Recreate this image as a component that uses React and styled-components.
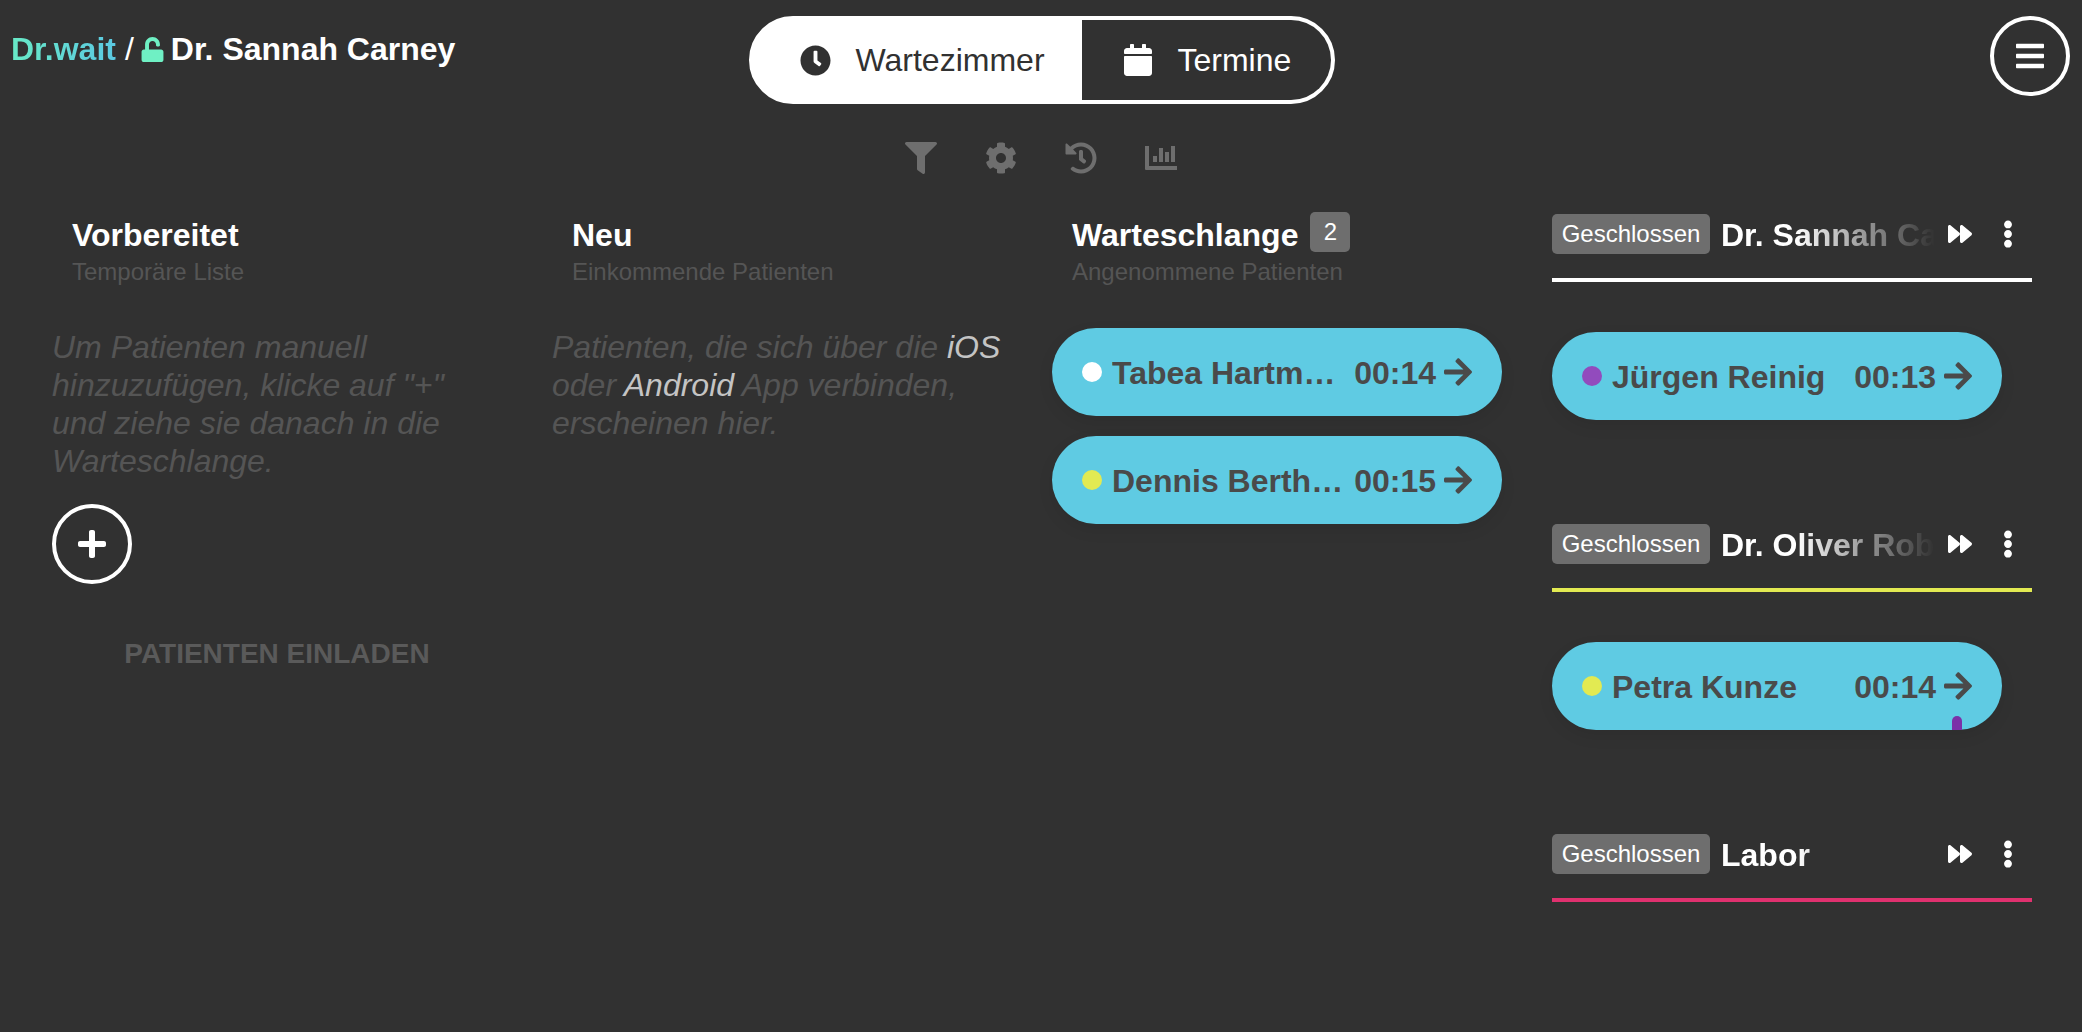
import React from 'react';
import styled, { createGlobalStyle } from 'styled-components';
import { FaClock, FaCalendar, FaFilter, FaCog, FaHistory, FaUnlock, FaBars, FaPlus, FaArrowRight, FaForward, FaEllipsisV } from 'react-icons/fa';

const Global = createGlobalStyle`
  html, body { margin: 0; padding: 0; background: #313131; }
  body { font-family: "Liberation Sans", Arial, sans-serif; color: #fff; }
`;

const Page = styled.div`
  min-height: 1032px;
  box-sizing: border-box;
  background: #313131;
`;
const Header = styled.header`
  display: grid;
  grid-template-columns: 1fr auto 1fr;
  align-items: start;
  padding: 16px 12px 0 12px;
`;
const Logo = styled.div`
  display: flex;
  align-items: center;
  height: 40px;
  margin: 13px 0 0 -1px;
  font-size: 32px;
  font-weight: 700;
  line-height: 40px;
`;
const Brand = styled.span`
  background: linear-gradient(90deg, #68e9c6, #5bc9e2);
  -webkit-background-clip: text;
  background-clip: text;
  color: transparent;
`;
const Slash = styled.span`
  margin: 0 6px 0 9px;
  font-weight: 400;
`;
const LockWrap = styled.span`
  display: flex;
  margin: 1px 6px 0 0;
  color: #6ff0c4;
  font-size: 25px;
`;
const Toggle = styled.nav`
  display: flex;
  width: 586px;
  height: 88px;
  margin-left: 1px;
  box-sizing: border-box;
  border: 4px solid #fff;
  border-radius: 44px;
  background: #fff;
`;
const Segment = styled.div`
  display: flex;
  align-items: center;
  gap: ${p => (p.$active ? 25 : 24)}px;
  box-sizing: border-box;
  height: 100%;
  width: ${p => (p.$active ? 329 : 249)}px;
  padding-left: ${p => (p.$active ? 47 : 40)}px;
  border-radius: ${p => (p.$active ? '0' : '0 40px 40px 0')};
  background: ${p => (p.$active ? 'transparent' : '#313131')};
  color: ${p => (p.$active ? '#313131' : '#fff')};
  font-size: 32px;
  svg { flex: none; font-size: ${p => (p.$active ? 31 : 32)}px; }
`;
const RoundButton = styled.button`
  display: flex;
  align-items: center;
  justify-content: center;
  width: 80px;
  height: 80px;
  padding: 0;
  box-sizing: border-box;
  border: 4px solid #fff;
  border-radius: 50%;
  background: transparent;
  color: #fff;
  font-size: 32px;
`;
const MenuButton = styled(RoundButton)`
  justify-self: end;
`;
const Tools = styled.div`
  display: flex;
  justify-content: center;
  align-items: center;
  gap: 48px;
  height: 32px;
  margin-top: 38px;
  color: #6e6e6e;
  font-size: 32px;
  svg { display: block; }
`;
const Board = styled.main`
  display: grid;
  grid-template-columns: 450px 450px 450px 480px;
  column-gap: 50px;
  align-items: start;
  margin-top: 40px;
  padding-left: 52px;
`;
const Column = styled.section`
  min-width: 0;
`;
const ColumnHead = styled.div`
  padding: 1px 0 0 20px;
  height: 114px;
  box-sizing: border-box;
`;
const TitleRow = styled.div`
  display: flex;
  align-items: flex-start;
`;
const Title = styled.h2`
  margin: 0;
  font-size: 32px;
  line-height: 40px;
  font-weight: 700;
`;
const Count = styled.span`
  display: flex;
  align-items: center;
  justify-content: center;
  width: 40px;
  height: 40px;
  margin: -3px 0 0 12px;
  border-radius: 5px;
  background: #6e6e6e;
  font-size: 24px;
`;
const Sub = styled.div`
  margin-top: 2px;
  font-size: 24px;
  line-height: 30px;
  color: #555;
`;
const Hint = styled.p`
  margin: 0;
  font-size: 32px;
  line-height: 38px;
  font-style: italic;
  color: #555;
`;
const Lit = styled.span`
  color: #c4c4c4;
`;
const AddButton = styled(RoundButton)`
  margin-top: 24px;
`;
const Invite = styled.div`
  margin-top: 55px;
  text-align: center;
  font-size: 28px;
  line-height: 30px;
  font-weight: 700;
  color: #5a5a5a;
`;
const PillList = styled.div`
  display: flex;
  flex-direction: column;
  gap: 20px;
`;
const Pill = styled.div`
  position: relative;
  display: flex;
  align-items: center;
  width: 450px;
  height: 88px;
  box-sizing: border-box;
  padding: 0 30px;
  border-radius: 44px;
  background: #5fcbe3;
  color: #4a4a4a;
  font-size: 32px;
  font-weight: 700;
  box-shadow: 0 6px 16px rgba(0, 0, 0, 0.08);
`;
const Dot = styled.span`
  flex: none;
  width: 20px;
  height: 20px;
  border-radius: 50%;
  background: ${p => p.$color};
`;
const PatientName = styled.span`
  flex: 1;
  min-width: 0;
  margin-left: 10px;
  padding-top: 2px;
  overflow: hidden;
  white-space: nowrap;
  text-overflow: ellipsis;
`;
const Time = styled.span`
  flex: none;
  margin: 0 8px 0 9px;
  padding-top: 2px;
`;
const Arrow = styled(FaArrowRight)`
  flex: none;
  width: 28px;
  height: 32px;
`;
const DragMark = styled.span`
  position: absolute;
  left: 400px;
  bottom: 0;
  width: 10px;
  height: 14px;
  border-radius: 5px 5px 0 0;
  background: #7b30a8;
`;
const Room = styled.section`
  min-height: 310px;
  &:last-child { min-height: 0; }
`;
const RoomHead = styled.div`
  display: flex;
  align-items: center;
  height: 68px;
  padding-bottom: 24px;
  box-sizing: border-box;
  border-bottom: 4px solid ${p => p.$color};
`;
const Closed = styled.span`
  flex: none;
  display: flex;
  align-items: center;
  justify-content: center;
  width: 158px;
  height: 40px;
  border-radius: 5px;
  background: #6e6e6e;
  font-size: 24px;
`;
const RoomName = styled.h3`
  flex: none;
  width: 214px;
  margin: 2px 0 0 11px;
  overflow: hidden;
  white-space: nowrap;
  font-size: 32px;
  line-height: 40px;
  font-weight: 700;
  -webkit-mask-image: linear-gradient(90deg, #000 35%, transparent 100%);
  mask-image: linear-gradient(90deg, #000 35%, transparent 100%);
`;
const RoomTools = styled.div`
  display: flex;
  align-items: center;
  margin: -1px 0 0 13px;
  gap: 22px;
  font-size: 24px;
  svg { display: block; }
`;
const Kebab = styled(FaEllipsisV)`
  font-size: 28px;
`;
const RoomBody = styled.div`
  margin-top: 50px;
`;

const ChartIcon = () => (
  <svg width="32" height="32" viewBox="0 0 32 32" fill="currentColor">
    <path d="M0 4h4v20h28v4H1a1 1 0 0 1-1-1z" />
    <rect x="8" y="14" width="4" height="6" />
    <rect x="14" y="6" width="4" height="14" />
    <rect x="20" y="10" width="4" height="10" />
    <rect x="26" y="4" width="4" height="16" />
  </svg>
);

const Patient = ({ dot, name, time, drag }) => (
  <Pill>
    <Dot $color={dot} />
    <PatientName>{name}</PatientName>
    <Time>{time}</Time>
    <Arrow />
    {drag && <DragMark />}
  </Pill>
);

const rooms = [
  { name: 'Dr. Sannah Carney', color: '#fff', patient: { dot: '#924bbd', name: 'Jürgen Reinig', time: '00:13' } },
  { name: 'Dr. Oliver Robertson', color: '#e2ea52', patient: { dot: '#e2ea52', name: 'Petra Kunze', time: '00:14', drag: true } },
  { name: 'Labor', color: '#e0316f' },
];

export default function App() {
  return (
    <Page>
      <Global />
      <Header>
        <Logo>
          <Brand>Dr.wait</Brand>
          <Slash>/</Slash>
          <LockWrap><FaUnlock /></LockWrap>
          Dr. Sannah Carney
        </Logo>
        <Toggle>
          <Segment $active><FaClock />Wartezimmer</Segment>
          <Segment><FaCalendar />Termine</Segment>
        </Toggle>
        <MenuButton><FaBars /></MenuButton>
      </Header>
      <Tools>
        <FaFilter />
        <FaCog />
        <FaHistory />
        <ChartIcon />
      </Tools>
      <Board>
        <Column>
          <ColumnHead>
            <Title>Vorbereitet</Title>
            <Sub>Temporäre Liste</Sub>
          </ColumnHead>
          <Hint>Um Patienten manuell hinzuzufügen, klicke auf "+" und ziehe sie danach in die Warteschlange.</Hint>
          <AddButton><FaPlus /></AddButton>
          <Invite>PATIENTEN EINLADEN</Invite>
        </Column>
        <Column>
          <ColumnHead>
            <Title>Neu</Title>
            <Sub>Einkommende Patienten</Sub>
          </ColumnHead>
          <Hint>Patienten, die sich über die <Lit>iOS</Lit> oder <Lit>Android</Lit> App verbinden, erscheinen hier.</Hint>
        </Column>
        <Column>
          <ColumnHead>
            <TitleRow>
              <Title>Warteschlange</Title>
              <Count>2</Count>
            </TitleRow>
            <Sub>Angenommene Patienten</Sub>
          </ColumnHead>
          <PillList>
            <Patient dot="#fff" name="Tabea Hartmann" time="00:14" />
            <Patient dot="#e2ea52" name="Dennis Berthold" time="00:15" />
          </PillList>
        </Column>
        <Column>
          {rooms.map(room => (
            <Room key={room.name}>
              <RoomHead $color={room.color}>
                <Closed>Geschlossen</Closed>
                <RoomName>{room.name}</RoomName>
                <RoomTools>
                  <FaForward />
                  <Kebab />
                </RoomTools>
              </RoomHead>
              {room.patient && (
                <RoomBody>
                  <Patient {...room.patient} />
                </RoomBody>
              )}
            </Room>
          ))}
        </Column>
      </Board>
    </Page>
  );
}
